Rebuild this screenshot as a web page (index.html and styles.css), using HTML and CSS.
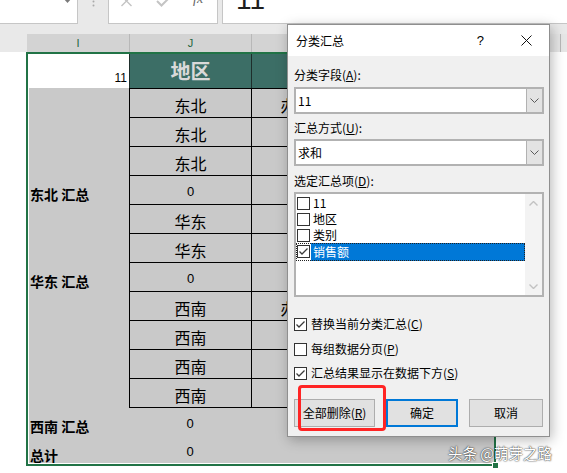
FILE: index.html
```html
<!DOCTYPE html>
<html lang="zh-CN">
<head>
<meta charset="utf-8">
<title>分类汇总</title>
<link rel="stylesheet" href="styles.css">
</head>
<body>
<div class="app">
  <div class="toolbar">
    <div class="namebox"><svg class="nb-arrow" width="10" height="4" viewBox="0 0 10 4"><polygon points="0,-2 9,-2 4.5,3"/></svg></div>
    <div class="grip"><svg width="3" height="8" viewBox="0 0 3 8"><circle cx="1.5" cy="1.5" r="1"/><circle cx="1.5" cy="5.5" r="1"/></svg></div>
    <div class="fnbox">
      <svg class="ic-x" width="11" height="8" viewBox="0 0 11 8"><path d="M0.5 -4 L10.5 6 M10.5 -4 L0.5 6"/></svg>
      <svg class="ic-ok" width="14" height="8" viewBox="0 0 14 8"><polyline points="1,1 5.5,5.5 13,-2"/></svg>
      <span class="fx">fx</span>
    </div>
    <div class="formula"><span class="fval">11</span></div>
  </div>

  <div class="sheet">
    <div class="ch corner"></div><div class="ch">I</div><div class="ch sep">J</div><div class="ch sep"></div><div class="ch sep"></div><div class="ch sep un"></div><div class="ch sep un"></div>

    <div class="rh"></div><div class="c i1">11</div><div class="c th">地区</div><div class="c th"></div><div class="c th"></div><div></div><div></div>

    <div class="rh"></div><div class="c g lab"></div><div class="c g d bd">东北</div><div class="c g d bd">办公用品</div><div class="c g d bd"></div><div></div><div></div>
    <div class="rh"></div><div class="c g lab"></div><div class="c g d bd">东北</div><div class="c g d bd"></div><div class="c g d bd"></div><div></div><div></div>
    <div class="rh"></div><div class="c g lab"></div><div class="c g d bd">东北</div><div class="c g d bd"></div><div class="c g d bd"></div><div></div><div></div>
    <div class="rh"></div><div class="c g lab">东北 汇总</div><div class="c g d bd num">0</div><div class="c g d bd"></div><div class="c g d bd"></div><div></div><div></div>
    <div class="rh"></div><div class="c g lab"></div><div class="c g d bd">华东</div><div class="c g d bd"></div><div class="c g d bd"></div><div></div><div></div>
    <div class="rh"></div><div class="c g lab"></div><div class="c g d bd">华东</div><div class="c g d bd"></div><div class="c g d bd"></div><div></div><div></div>
    <div class="rh"></div><div class="c g lab">华东 汇总</div><div class="c g d bd num">0</div><div class="c g d bd"></div><div class="c g d bd"></div><div></div><div></div>
    <div class="rh"></div><div class="c g lab"></div><div class="c g d bd">西南</div><div class="c g d bd">办公用品</div><div class="c g d bd"></div><div></div><div></div>
    <div class="rh"></div><div class="c g lab"></div><div class="c g d bd">西南</div><div class="c g d bd"></div><div class="c g d bd"></div><div></div><div></div>
    <div class="rh"></div><div class="c g lab"></div><div class="c g d bd">西南</div><div class="c g d bd"></div><div class="c g d bd"></div><div></div><div></div>
    <div class="rh"></div><div class="c g lab"></div><div class="c g d bd">西南</div><div class="c g d bd"></div><div class="c g d bd"></div><div></div><div></div>
    <div class="rh"></div><div class="c g lab">西南 汇总</div><div class="c g d bt num">0</div><div class="c g d bt"></div><div class="c g d bt"></div><div></div><div></div>
    <div class="rh"></div><div class="c g lab">总计</div><div class="c g d num">0</div><div class="c g d"></div><div class="c g d"></div><div></div><div></div>
  </div>

  <div class="selection"><div class="handle"></div></div>

  <div class="dialog">
    <div class="dlg-title">
      <span class="dlg-caption">分类汇总</span>
      <span class="dlg-help">?</span>
      <svg class="dlg-close" width="11" height="11" viewBox="0 0 11 11"><path d="M0.5 0.5 L10.5 10.5 M10.5 0.5 L0.5 10.5"/></svg>
    </div>
    <div class="dlg-body">
      <div class="lbl l1">分类字段(<u>A</u>):</div>
      <div class="combo c1"><span class="cv">11</span><span class="cb"><svg width="9" height="5" viewBox="0 0 9 5"><polyline points="0.5,0.5 4.5,4.5 8.5,0.5"/></svg></span></div>
      <div class="lbl l2">汇总方式(<u>U</u>):</div>
      <div class="combo c2"><span class="cv">求和</span><span class="cb"><svg width="9" height="5" viewBox="0 0 9 5"><polyline points="0.5,0.5 4.5,4.5 8.5,0.5"/></svg></span></div>
      <div class="lbl l3">选定汇总项(<u>D</u>):</div>
      <div class="listbox">
        <div class="items">
          <div class="item"><span class="chk"></span><span class="it">11</span></div>
          <div class="item"><span class="chk"></span><span class="it">地区</span></div>
          <div class="item"><span class="chk"></span><span class="it">类别</span></div>
          <div class="item sel"><span class="chk"><svg width="11" height="11" viewBox="0 0 11 11"><polyline points="1.5,5.5 4,8 9.5,2.5"/></svg></span><span class="it">销售额</span></div>
        </div>
        <div class="vscroll">
          <svg width="9" height="5" viewBox="0 0 9 5"><polyline points="0.5,4.5 4.5,0.5 8.5,4.5"/></svg>
          <svg width="9" height="5" viewBox="0 0 9 5"><polyline points="0.5,0.5 4.5,4.5 8.5,0.5"/></svg>
        </div>
      </div>
      <div class="opt o1"><span class="chk"><svg width="11" height="11" viewBox="0 0 11 11"><polyline points="1.5,5.5 4,8 9.5,2.5"/></svg></span><span>替换当前分类汇总(<u>C</u>)</span></div>
      <div class="opt o2"><span class="chk"></span><span>每组数据分页(<u>P</u>)</span></div>
      <div class="opt o3"><span class="chk"><svg width="11" height="11" viewBox="0 0 11 11"><polyline points="1.5,5.5 4,8 9.5,2.5"/></svg></span><span>汇总结果显示在数据下方(<u>S</u>)</span></div>
      <div class="btns">
        <button type="button" class="btn b1">全部删除(<u>R</u>)</button>
        <button type="button" class="btn b2">确定</button>
        <button type="button" class="btn b3">取消</button>
      </div>
    </div>
  </div>

  <div class="annot"></div>
  <div class="watermark">头条 @萌芽之路</div>
</div>
</body>
</html>
```

FILE: styles.css
```css
* { box-sizing: border-box; }
html, body { margin: 0; padding: 0; }
body {
  width: 567px; height: 473px; overflow: hidden; background: #fff;
  font-family: "Noto Sans CJK SC", "Noto Sans", sans-serif; color: #000;
}
.app { position: relative; width: 567px; height: 473px; overflow: hidden; }

/* formula bar */
.toolbar { display: flex; align-items: flex-start; height: 34px; background: #e9e9e9; }
.namebox { width: 78px; height: 24px; background: #fff; border-right: 1px solid #c6c6c6; border-bottom: 1px solid #c6c6c6; }
.nb-arrow { display: block; margin-left: 63px; fill: #7a7a7a; }
.grip { width: 30px; height: 24px; }
.grip svg { display: block; margin-left: 14px; fill: #a9a9a9; }
.fnbox {
  display: flex; align-items: flex-start; width: 110px; height: 24px; background: #fff;
  border-left: 1px solid #c6c6c6; border-right: 1px solid #c6c6c6; border-bottom: 1px solid #c6c6c6;
  overflow: hidden;
}
.ic-x { display: block; margin-left: 12px; fill: none; stroke: #c4c4c4; stroke-width: 1.4; }
.ic-ok { display: block; margin-left: 24px; fill: none; stroke: #c4c4c4; stroke-width: 2; }
.fx { margin-left: 23px; margin-top: -8px; font: italic 14px/14px "Liberation Serif", serif; color: #666; }
.formula {
  flex: 1; height: 24px; margin-left: 4px; background: #fff; overflow: hidden;
  border-left: 1px solid #c6c6c6; border-bottom: 1px solid #c6c6c6; padding-left: 13px;
}
.fval { display: block; margin-top: -14px; font: 28px/28px "Liberation Sans", sans-serif; color: #1e1e1e; }

/* sheet */
.sheet {
  display: grid;
  grid-template-columns: 27px 102px 122px 122px 123px 64px 1fr;
  grid-template-rows: 18px 36px repeat(13, 29px);
}
.ch { background: #d3d3d3; font: 11px/18px "Liberation Sans", sans-serif; color: #25643c; text-align: center; }
.ch.corner { background: #e9e9e9; }
.ch.sep { border-left: 1px solid #b8b8b8; }
.ch.un { background: #e6e6e6; color: #444; }

.c { display: flex; min-width: 0; overflow: hidden; white-space: nowrap; }
.g { background: #c9c9c9; }
.i1 {
  justify-content: flex-end; align-items: flex-end; padding: 0 2px 3px 0;
  font: 12px/14px "Liberation Sans", sans-serif;
}
.th {
  background: #3c6e66; color: #d9d9d9; font-weight: bold; font-size: 20px; line-height: 24px;
  justify-content: center; align-items: center; padding-top: 2px; border-left: 1px solid #1e2e2b;
}
.lab { align-items: flex-end; padding: 0 0 1px 3px; font-weight: bold; font-size: 14px; line-height: 18px; }
.d { justify-content: center; align-items: center; padding-top: 3px; font-size: 16px; line-height: 20px; }
.bd { border-top: 1px solid #000; border-left: 1px solid #000; }
.bt { border-top: 1px solid #000; }
.num { font-family: "Liberation Sans", sans-serif; font-size: 13px; }

/* selection frame over cells */
.selection {
  position: absolute; left: 26px; top: 52px; width: 470px; height: 414px;
  border: 2px solid #217346; box-shadow: inset 1px -1px 0 #fff; pointer-events: none;
}
.handle {
  position: absolute; right: -5px; bottom: -5px; width: 7px; height: 7px;
  background: #217346; border: 1px solid #fff;
}

/* dialog */
.dialog {
  position: absolute; left: 287px; top: 24px; width: 263px; height: 413px;
  background: #f0f0f0; border: 1px solid #8f8f8f;
  box-shadow: 2px 3px 12px rgba(0, 0, 0, 0.28);
  display: flex; flex-direction: column; font-size: 12px;
}
.dlg-title { display: flex; align-items: center; height: 31px; flex: none; background: #fff; padding: 0 17px 0 8px; }
.dlg-caption { font-size: 12px; line-height: 16px; }
.dlg-help { margin-left: auto; font: 13px/16px "Liberation Sans", sans-serif; }
.dlg-close { display: block; margin-left: 37px; stroke: #111; stroke-width: 1; }
.dlg-body { display: flex; flex-direction: column; padding: 0 5px 0 6px; }
.lbl { height: 16px; line-height: 16px; }
.l1 { margin-top: 11px; }
.l2 { margin-top: 6px; }
.l3 { margin-top: 7px; }
.combo { display: flex; height: 27px; background: #fff; border: 2px solid #b2b2b2; }
.c1 { margin-top: 4px; }
.c2 { margin-top: 3px; }
.cv { flex: 1; padding-left: 2px; line-height: 23px; }
.cb {
  width: 16px; background: #e3e3e3; border-left: 1px solid #b2b2b2;
  display: flex; align-items: center; justify-content: center;
}
.cb svg { display: block; fill: none; stroke: #5a5a5a; stroke-width: 1; }

.listbox { display: flex; height: 105px; margin-top: 3px; background: #fff; border: 2px solid #b2b2b2; }
.items { flex: 1; padding-top: 1px; }
.item { display: flex; height: 16px; }
.item .chk { margin: 2px 0 0 1px; }
.it { flex: 1; margin-left: 1px; padding-left: 2px; line-height: 16px; }
.item.sel { height: 18px; outline: 1px dotted #222; outline-offset: -1px; }
.item.sel .it { background: #0078d7; color: #fff; line-height: 18px; }
.vscroll {
  width: 17px; background: #f3f3f3; display: flex; flex-direction: column;
  align-items: center; justify-content: space-between; padding: 7px 0 6px;
}
.vscroll svg { display: block; fill: none; stroke: #c2c2c2; stroke-width: 1.4; }

.chk { display: block; flex: none; width: 13px; height: 13px; border: 1px solid #333; background: #fff; }
.chk svg { display: block; fill: none; stroke: #3a3a3a; stroke-width: 1.3; }

.opt { display: flex; align-items: center; height: 18px; line-height: 18px; }
.opt .chk { margin-right: 4px; }
.o1 { margin-top: 18px; }
.o2 { margin-top: 7px; }
.o3 { margin-top: 6px; }

.btns { display: flex; height: 28px; margin-top: 17px; }
.btn {
  height: 28px; padding: 0; margin: 0; background: #e1e1e1; border: 1px solid #adadad;
  font: 12px/16px "Noto Sans CJK SC", sans-serif; color: #000;
  display: flex; align-items: center; justify-content: center;
}
.b1 { width: 81px; }
.b2 { width: 72px; margin-left: 11px; border: 2px solid #0078d7; }
.b3 { width: 74px; margin-left: 11px; }

/* annotation + watermark */
.annot {
  position: absolute; left: 298px; top: 385px; width: 88px; height: 46px;
  border: 3px solid #ff2424; border-radius: 4px;
}
.watermark {
  position: absolute; left: 448px; top: 444px; font-size: 14.5px; line-height: 18px;
  color: #fff; white-space: nowrap;
  text-shadow: 0 0 1px #222, 0 0 2px rgba(0, 0, 0, 0.7);
}
```
